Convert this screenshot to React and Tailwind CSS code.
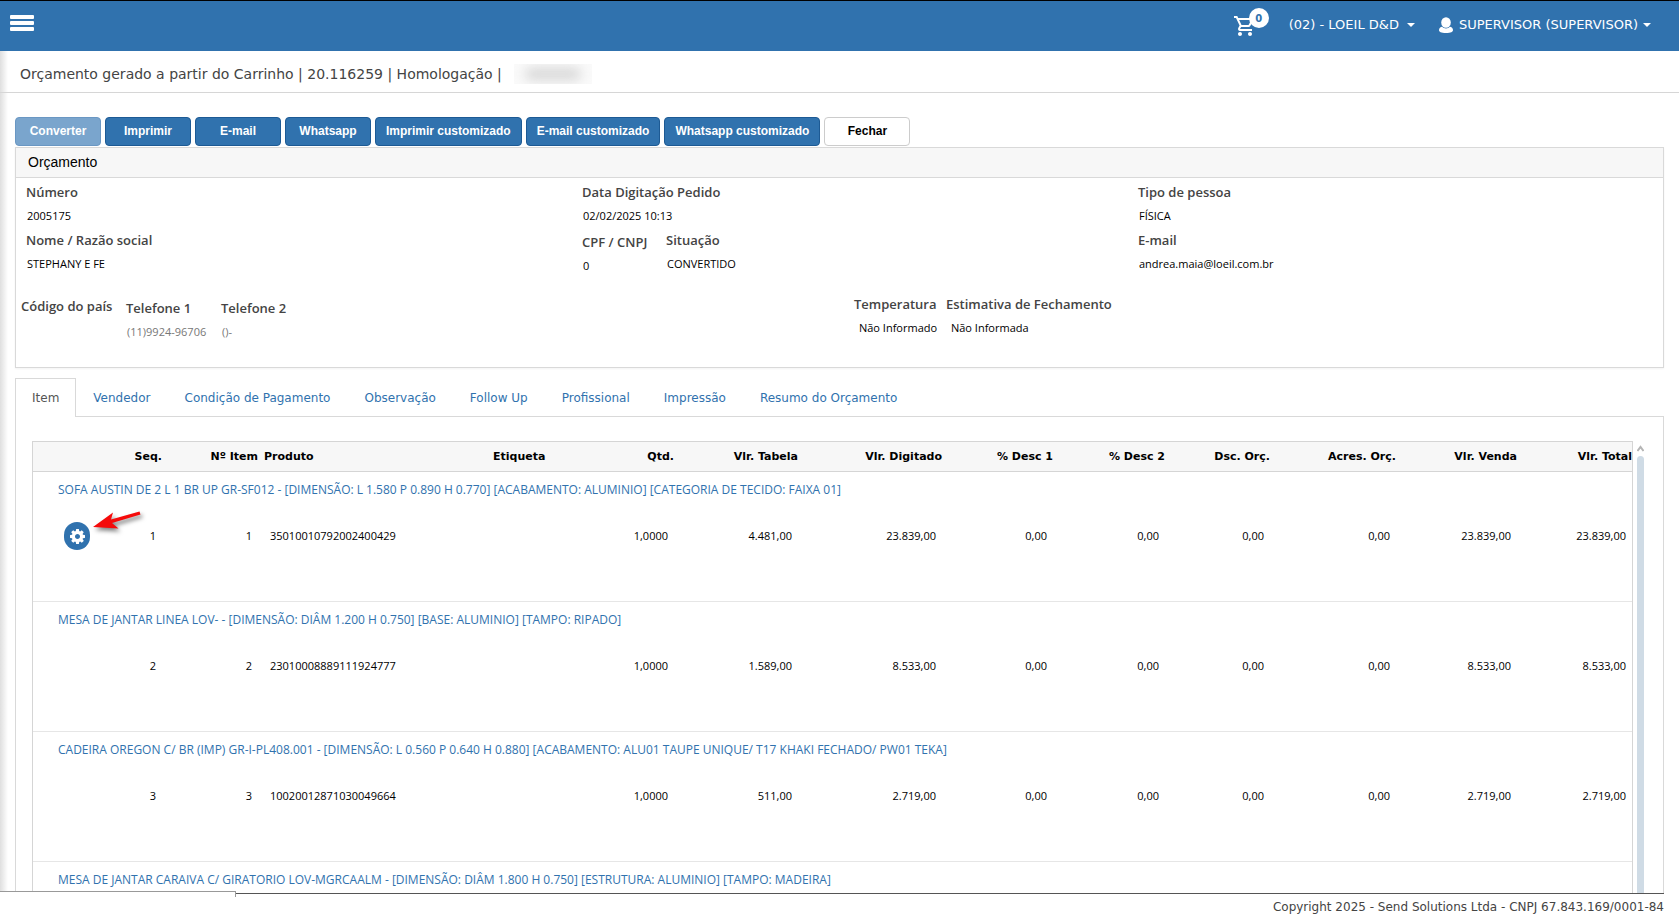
const actions = [
  'Imprimir',
  'E-mail',
  'Whatsapp',
  'Imprimir customizado',
  'E-mail customizado',
  'Whatsapp customizado',
]

const tabs = [
  'Vendedor',
  'Condição de Pagamento',
  'Observação',
  'Follow Up',
  'Profissional',
  'Impressão',
  'Resumo do Orçamento',
]

const columns = [
  { label: '', width: 'w-[67px]' },
  { label: 'Seq.', width: 'w-16' },
  { label: 'Nº Item', width: 'w-24' },
  { label: 'Produto', width: 'w-[229px]', left: true },
  { label: 'Etiqueta', width: 'w-[111px]', left: true },
  { label: 'Qtd.', width: 'w-[76px]' },
  { label: 'Vlr. Tabela', width: 'w-[124px]' },
  { label: 'Vlr. Digitado', width: 'w-36' },
  { label: '% Desc 1', width: 'w-[111px]' },
  { label: '% Desc 2', width: 'w-28' },
  { label: 'Dsc. Orç.', width: 'w-[105px]' },
  { label: 'Acres. Orç.', width: 'w-[126px]' },
  { label: 'Vlr. Venda', width: 'w-[121px]' },
  { label: 'Vlr. Total', width: 'w-[113px]' },
]

const items = [
  {
    title: 'SOFA AUSTIN DE 2 L 1 BR UP GR-SF012 - [DIMENSÃO: L 1.580 P 0.890 H 0.770] [ACABAMENTO: ALUMINIO] [CATEGORIA DE TECIDO: FAIXA 01]',
    cells: ['1', '1', '35010010792002400429', '', '1,0000', '4.481,00', '23.839,00', '0,00', '0,00', '0,00', '0,00', '23.839,00', '23.839,00'],
    menu: true,
  },
  {
    title: 'MESA DE JANTAR LINEA LOV- - [DIMENSÃO: DIÂM 1.200 H 0.750] [BASE: ALUMINIO] [TAMPO: RIPADO]',
    cells: ['2', '2', '23010008889111924777', '', '1,0000', '1.589,00', '8.533,00', '0,00', '0,00', '0,00', '0,00', '8.533,00', '8.533,00'],
  },
  {
    title: 'CADEIRA OREGON C/ BR (IMP) GR-I-PL408.001 - [DIMENSÃO: L 0.560 P 0.640 H 0.880] [ACABAMENTO: ALU01 TAUPE UNIQUE/ T17 KHAKI FECHADO/ PW01 TEKA]',
    cells: ['3', '3', '10020012871030049664', '', '1,0000', '511,00', '2.719,00', '0,00', '0,00', '0,00', '0,00', '2.719,00', '2.719,00'],
  },
  {
    title: 'MESA DE JANTAR CARAIVA C/ GIRATORIO LOV-MGRCAALM - [DIMENSÃO: DIÂM 1.800 H 0.750] [ESTRUTURA: ALUMINIO] [TAMPO: MADEIRA]',
    cells: [],
  },
]

function Caret() {
  return (
    <svg viewBox="0 0 8 4" className="h-1 w-2 fill-current" aria-hidden="true">
      <path d="M0 0h8L4 4z" />
    </svg>
  )
}

function Gear() {
  return (
    <svg viewBox="0 0 1536 1536" className="size-[15px] fill-white" aria-hidden="true">
      <path d="M1024 768q0-106-75-181t-181-75-181 75-75 181 75 181 181 75 181-75 75-181zm512-109v222q0 12-8 23t-20 13l-185 28q-19 54-39 91 35 50 107 138 10 12 10 25t-9 23q-27 37-99 108t-94 71q-12 0-26-9l-138-108q-44 23-91 38-16 136-29 186-7 28-36 28H657q-14 0-24.500-8.500T621 1506l-28-184q-49-16-90-37l-141 107q-10 9-25 9-14 0-25-11-126-114-165-168-7-10-7-23 0-12 8-23 15-21 51-66.500t54-70.500q-27-50-41-99L29 913q-13-2-21-12.500T0 877V655q0-12 8-23t19-13l186-28q14-46 39-92-40-57-107-138-10-12-10-24 0-10 9-23 26-36 98.500-107.500T337 135q13 0 26 10l138 107q44-23 91-38 16-136 29-186 7-28 36-28h222q14 0 24.500 8.500T915 30l28 184q49 16 90 37l142-107q9-9 24-9 13 0 25 10 129 119 165 170 7 8 7 22 0 12-8 23-15 21-51 66.500t-54 70.500q26 50 41 98l183 28q13 2 21 12.500t8 23.500z" />
    </svg>
  )
}

function Field({ label, value, className = '', valueClass = '' }) {
  return (
    <dl className={className}>
      <dt className="text-[13px] leading-5 font-semibold whitespace-nowrap text-[#444]">{label}</dt>
      <dd className={`mt-1 pl-px text-[11px] leading-5 whitespace-nowrap ${valueClass || 'text-black'}`}>{value}</dd>
    </dl>
  )
}

export default function App() {
  return (
    <div className="flex h-screen flex-col overflow-hidden bg-white font-['DejaVu_Sans',sans-serif] text-[#444]">
      <header className="flex h-[51px] shrink-0 items-start justify-between border-t border-black bg-[#3072ae] pr-7 pl-[10px] text-white">
        <button type="button" aria-label="Menu" className="mt-3 flex flex-col gap-[2px] pt-[2px]">
          <span className="h-1 w-6 rounded-[1px] bg-white" />
          <span className="h-1 w-6 rounded-[1px] bg-white" />
          <span className="h-1 w-6 rounded-[1px] bg-white" />
        </button>
        <nav className="flex h-12 items-center text-[13px]">
          <a href="#carrinho" aria-label="Carrinho" className="relative mr-5 block h-8 w-9">
            <svg viewBox="0 0 24 24" className="absolute top-[5px] left-0 size-6 fill-white" aria-hidden="true">
              <path d="M15.550 13c.75 0 1.410-.41 1.750-1.030l3.580-6.490A.996.996 0 0 0 20.010 4H5.210l-.94-2H1v2h2l3.600 7.590-1.350 2.440C4.520 15.370 5.480 17 7 17h12v-2H7l1.100-2h7.450zM6.160 6h12.150l-2.760 5H8.530L6.160 6zM7 18c-1.100 0-1.990.9-1.990 2S5.900 22 7 22s2-.9 2-2-.9-2-2-2zm10 0c-1.100 0-1.990.9-1.990 2s.89 2 1.990 2 2-.9 2-2-.9-2-2-2z" />
            </svg>
            <span className="absolute -top-px right-0 flex size-5 items-center justify-center rounded-full bg-white text-[10px] font-bold text-[#3072ae]">0</span>
          </a>
          <button type="button" className="flex items-center gap-2 whitespace-nowrap">
            (02) - LOEIL D&amp;D
            <Caret />
          </button>
          <button type="button" className="ml-6 flex items-center whitespace-nowrap">
            <svg viewBox="0 0 14 16" className="mr-[6px] h-4 w-[14px] fill-white" aria-hidden="true">
              <ellipse cx="7" cy="5.500" rx="4.800" ry="5.300" />
              <path d="M0 13c0-2 1.500-3 3.200-3.200C5 12 9 12 10.800 9.800 12.500 10 14 11 14 13c0 2-2 3-7 3s-7-1-7-3z" />
            </svg>
            <span className="mr-[5px]">SUPERVISOR (SUPERVISOR)</span>
            <Caret />
          </button>
        </nav>
      </header>

      <div className="flex min-h-0 flex-1">
        <div className="-mr-2 w-2 shrink-0 bg-linear-to-r from-[#dfdfdf] to-white" />
        <main className="flex min-w-0 flex-1 flex-col overflow-hidden">
          <div className="flex h-[42px] shrink-0 items-center border-b border-[#d6d6d6] pt-[5px] pl-5">
            <h1 className="text-[14px] whitespace-nowrap">Orçamento gerado a partir do Carrinho | 20.116259 | Homologação |</h1>
            <div className="ml-3 flex h-5 w-[78px] items-center justify-center overflow-hidden bg-[#fafafa]">
              <span className="h-3 w-14 rounded-full bg-[#d6d6d6] blur-[6px]" />
            </div>
          </div>

          <div className="flex min-h-0 flex-1 flex-col px-[15px] pt-6">
            <div className="flex shrink-0 gap-1 pb-px font-['Liberation_Sans',sans-serif] text-[12px] font-bold text-white">
              <button type="button" disabled className="h-[29px] min-w-[86px] rounded border border-[#6a97c3] bg-[#7aa5cd] px-2 pb-[2px]">
                Converter
              </button>
              {actions.map((label) => (
                <button key={label} type="button" className="h-[29px] min-w-[86px] rounded border border-[#1d5a94] bg-[#3072ae] px-[10px] pb-[2px] whitespace-nowrap">
                  {label}
                </button>
              ))}
              <button type="button" className="h-[29px] min-w-[86px] rounded border border-[#ccc] bg-white px-2 pb-[2px] text-black">
                Fechar
              </button>
            </div>

            <section className="shrink-0 border border-[#d9d9d9] font-['Open_Sans',sans-serif] shadow-xs">
              <h2 className="flex h-[30px] items-center border-b border-[#d9d9d9] bg-[#f7f7f7] px-3 font-['Liberation_Sans',sans-serif] text-[14px] text-black">Orçamento</h2>
              <div className="grid grid-cols-[556fr_556fr_515fr] gap-y-1 px-[10px] pt-1">
                <Field label="Número" value="2005175" />
                <Field label="Data Digitação Pedido" value="02/02/2025 10:13" />
                <Field label="Tipo de pessoa" value="FÍSICA" />
                <Field label="Nome / Razão social" value="STEPHANY E FE" />
                <div className="flex">
                  <Field label="CPF / CNPJ" value="0" className="w-[84px] pt-[2px]" />
                  <Field label="Situação" value="CONVERTIDO" />
                </div>
                <Field label="E-mail" value="andrea.maia@loeil.com.br" />
              </div>
              <div className="grid grid-cols-[834fr_805fr] px-[5px] pt-[18px] pb-[25px]">
                <div className="flex pt-[2px]">
                  <Field label="Código do país" value="" className="w-[105px]" />
                  <Field label="Telefone 1" value="(11)9924-96706" className="w-[95px] pt-[2px]" valueClass="text-[#777]" />
                  <Field label="Telefone 2" value="()-" className="pt-[2px]" valueClass="text-[#777]" />
                </div>
                <div className="flex">
                  <Field label="Temperatura" value="Não Informado" className="w-[92px]" valueClass="ml-1 text-black" />
                  <Field label="Estimativa de Fechamento" value="Não Informada" valueClass="ml-1 text-black" />
                </div>
              </div>
            </section>

            <div role="tablist" className="mt-[10px] flex shrink-0 text-[12px]">
              <button type="button" role="tab" aria-selected="true" className="h-[39px] border border-b-0 border-[#d9d9d9] px-4 text-[#555]">
                Item
              </button>
              {tabs.map((label) => (
                <button key={label} type="button" role="tab" aria-selected="false" className="border-b border-[#d9d9d9] px-[17px] pt-px whitespace-nowrap text-[#3072ae]">
                  {label}
                </button>
              ))}
              <div className="flex-1 border-b border-[#d9d9d9]" />
            </div>

            <div className="flex min-h-0 flex-1 items-stretch overflow-hidden border-x border-[#d9d9d9] pt-6 pr-[19px] pl-4">
              <div className="min-w-0 flex-1 overflow-hidden border border-b-0 border-[#d5d5d5]">
                <table className="w-full table-fixed border-collapse">
                  <thead>
                    <tr className="h-[29px] border-b border-[#d5d5d5] bg-[#f7f7f7] text-[11px] text-black">
                      {columns.map(({ label, width, left }, i) => (
                        <th key={i} scope="col" className={`${width} pt-[2px] font-bold whitespace-nowrap ${left ? 'pl-1 text-left' : 'pr-[2px] text-right last:pr-0'}`}>
                          {label}
                        </th>
                      ))}
                    </tr>
                  </thead>
                  {items.map(({ title, cells, menu }) => (
                    <tbody key={title} className="border-b border-[#e6e6e6] font-['Open_Sans',sans-serif]">
                      <tr className="h-9">
                        <td colSpan={14} className="pt-[2px] pl-[25px] text-[12px]">
                          <a href="#item" className="whitespace-nowrap text-[#3072ae]">{title}</a>
                        </td>
                      </tr>
                      <tr className="h-[94px] align-top text-[11px] leading-7 text-black">
                        <td className="relative pt-[15px] pl-[31px]">
                          {menu && (
                            <>
                              <button type="button" aria-label="Opções do item" className="flex h-7 w-[26px] items-center justify-center rounded-full bg-[#3072ae]">
                                <Gear />
                              </button>
                              <svg viewBox="0 0 52 28" className="absolute top-[3px] left-[60px] h-7 w-[52px] overflow-visible drop-shadow-[2px_3px_2px_rgba(0,0,0,0.5)]" aria-hidden="true">
                                <path d="M0 17 20 2.500 18 9.500 46.500 1.500l1 3L19 13l6.500 5.500z" className="fill-[#f50a0a]" />
                              </svg>
                            </>
                          )}
                        </td>
                        {cells.map((cell, i) => (
                          <td key={i} className={`pt-[15px] whitespace-nowrap ${columns[i + 1].left ? 'pl-[10px] text-left' : 'pr-2 text-right last:pr-[6px]'}`}>
                            {cell}
                          </td>
                        ))}
                      </tr>
                    </tbody>
                  ))}
                </table>
              </div>
              <div className="ml-1 flex w-[7px] flex-col pt-1">
                <svg viewBox="0 0 7 7" className="h-[7px] w-[7px] fill-none stroke-[#b5b5b5] stroke-2" aria-hidden="true">
                  <path d="M.5 6 3.500 2l3 4" />
                </svg>
                <div className="mt-1 flex-1 rounded-t bg-[#cfdbe5]" />
              </div>
            </div>
          </div>
        </main>
      </div>

      <footer className="relative mr-[15px] flex h-[26px] shrink-0 justify-end border-t border-[#555] pt-1 text-[12px] leading-[18px]">
        <div className="absolute -top-[3px] left-0 h-[6px] w-[236px] border-t border-r border-[#999] bg-white" />
        Copyright 2025 - Send Solutions Ltda - CNPJ 67.843.169/0001-84
      </footer>
    </div>
  )
}
